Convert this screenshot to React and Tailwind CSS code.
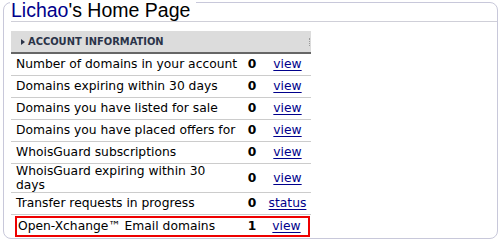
import React from "react";

const rows = [
  { label: "Number of domains in your account", n: "0", link: "view" },
  { label: "Domains expiring within 30 days", n: "0", link: "view" },
  { label: "Domains you have listed for sale", n: "0", link: "view" },
  { label: "Domains you have placed offers for", n: "0", link: "view" },
  { label: "WhoisGuard subscriptions", n: "0", link: "view" },
  { label: "WhoisGuard expiring within 30 days", n: "0", link: "view", tall: true },
  { label: "Transfer requests in progress", n: "0", link: "status" },
];

const font = { fontFamily: '"DejaVu Sans", Verdana, sans-serif' };

export default function App() {
  return (
    <div className="w-[500px] h-[240px] bg-white overflow-hidden pt-[2px] pl-[3px]">
      <div className="w-[495px] h-[237px] border border-[#c8c8da] rounded-[8px] pl-[7px]">
        <div
          className="relative -mt-[4px] h-[22px] leading-[22px] text-[19.5px] bg-white w-fit pr-[6px] pl-[1px] -ml-[1px] text-black"
          style={{ fontFamily: '"Liberation Sans", Arial, sans-serif' }}
        >
          <span className="text-[#00008b]">Lichao</span>'s Home Page
        </div>
        <div className="h-px bg-[#cfcfd8]" />
        <div className="mt-[9px] w-[300px]" style={font}>
          <div className="h-[23px] bg-[#dcdcdc] border-b-2 border-[#666666] flex items-center pl-[10px] pr-[1px]">
            <span className="w-0 h-0 border-y-[3px] border-y-transparent border-l-[4px] border-l-[#2a3348]" />
            <span
              className="ml-[3px] text-[11px] font-bold text-[#2a3348] leading-none"
              style={{ fontFamily: '"DejaVu Sans Condensed", "Liberation Sans", sans-serif', fontStretch: "condensed" }}
            >
              ACCOUNT INFORMATION
            </span>
            <span className="ml-auto w-px h-[8px] border-l border-dotted border-[#999999]" />
          </div>
          {rows.map((r) => (
            <div
              key={r.label}
              className={`flex items-center border-b border-[#cccccc] text-[12.3px] text-black ${r.tall ? "h-[29px] leading-[14px]" : "h-[22px] whitespace-nowrap"}`}
            >
              <div className={`w-[229px] pl-[5px] ${r.tall ? "pr-[10px]" : ""}`}>{r.label}</div>
              <div className="w-[24px] text-center font-bold">{r.n}</div>
              <div className="w-[47px] text-center">
                <span className="text-[#00008b] underline underline-offset-2">{r.link}</span>
              </div>
            </div>
          ))}
          <div className="mt-[1px] ml-[4px] w-[295px] h-[21px] border-2 border-[#ee0000] flex items-center text-[12.3px] text-black whitespace-nowrap">
            <div className="w-[223px] pl-[1px]">Open-Xchange™ Email domains</div>
            <div className="w-[24px] text-center font-bold">1</div>
            <div className="flex-1 text-center pl-[1px]">
              <span className="text-[#00008b] underline underline-offset-2">view</span>
            </div>
          </div>
        </div>
      </div>
    </div>
  );
}
